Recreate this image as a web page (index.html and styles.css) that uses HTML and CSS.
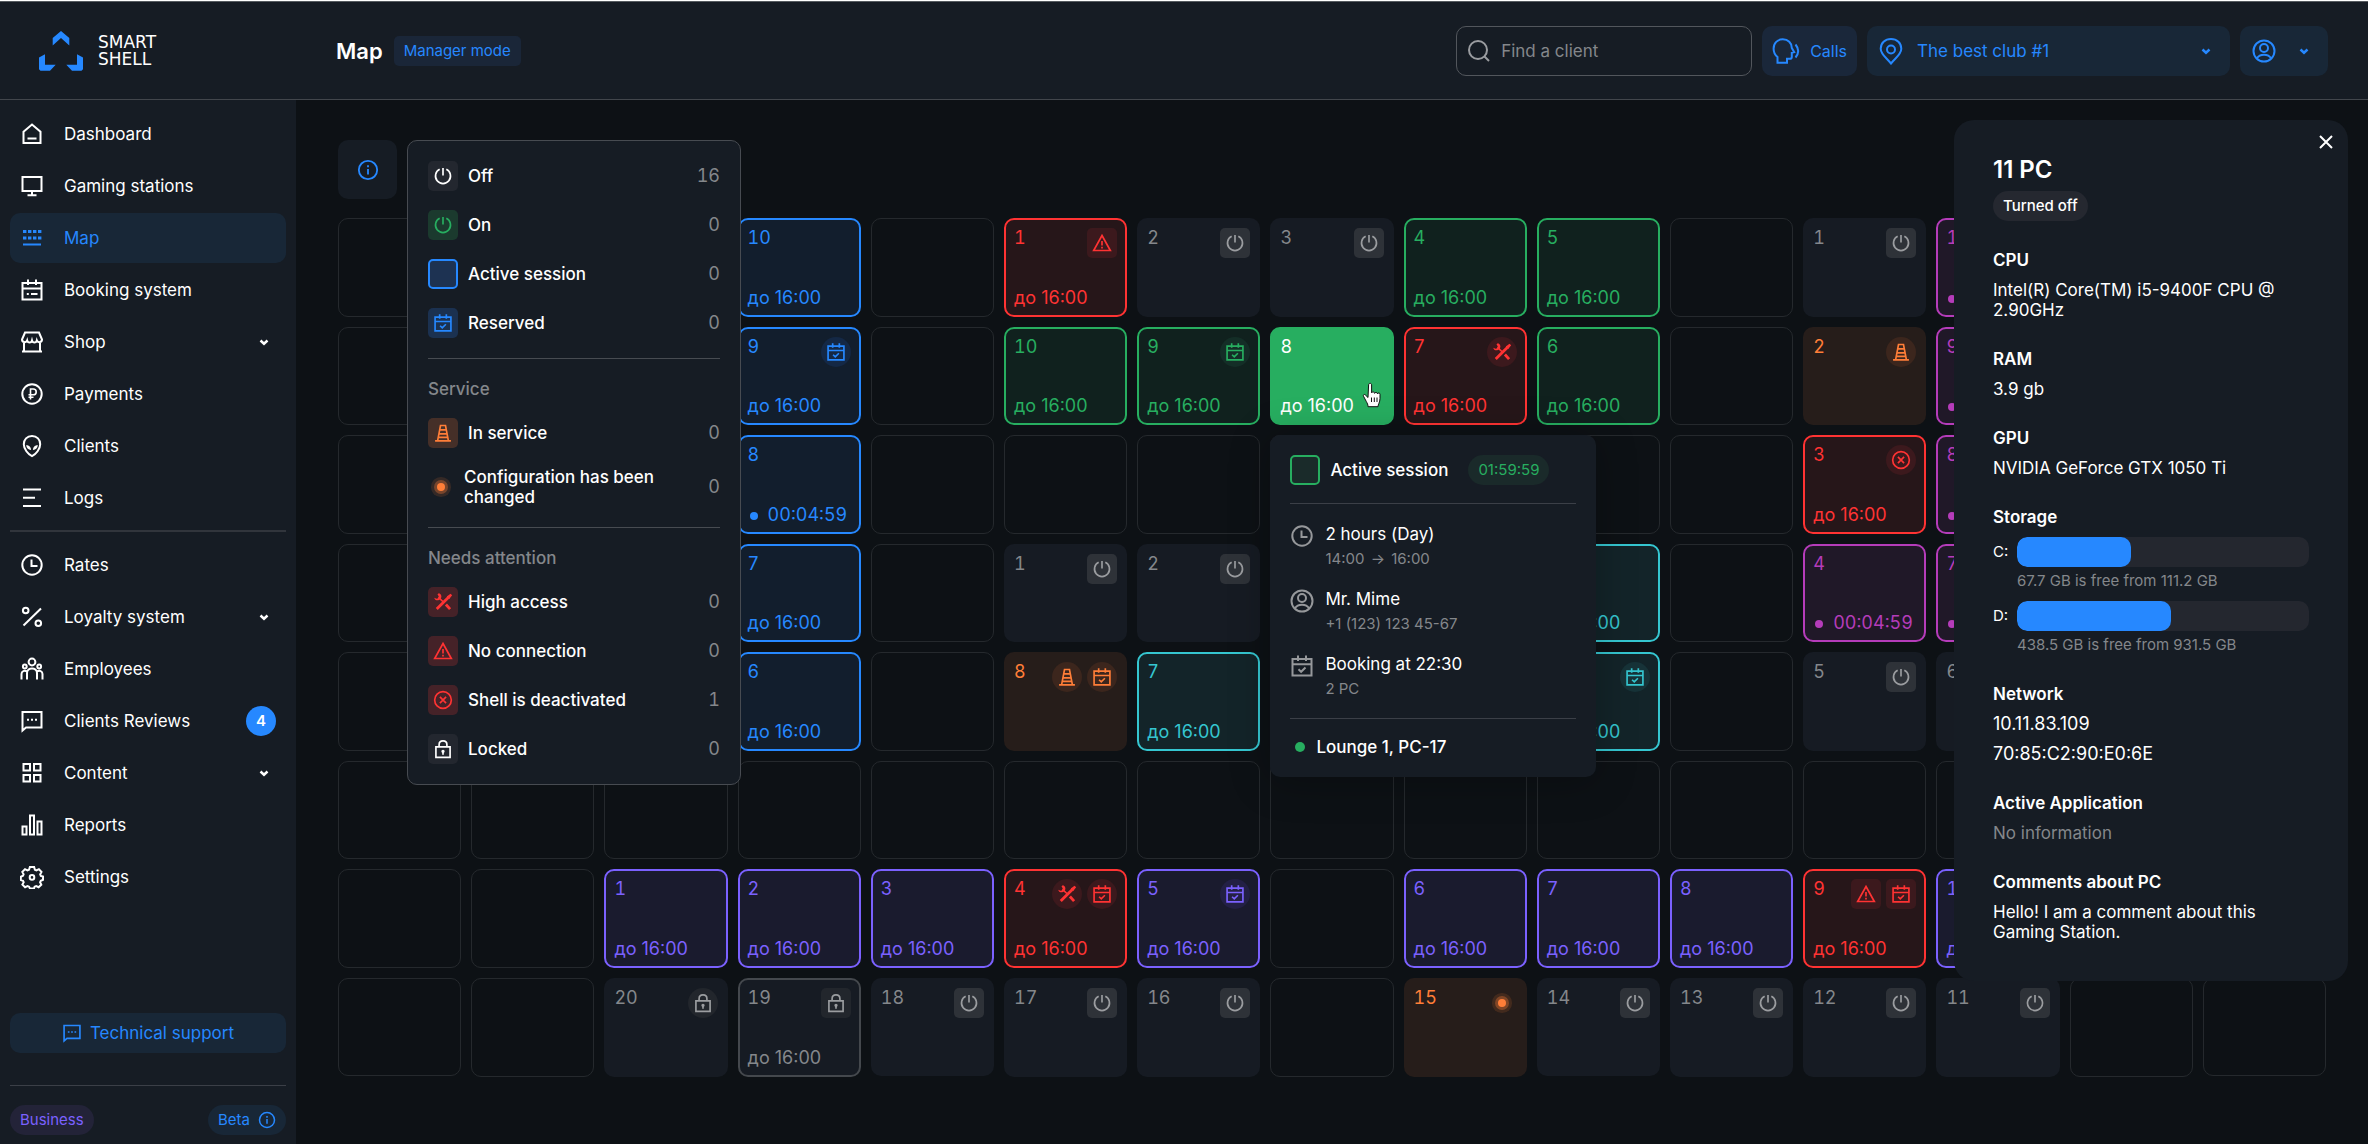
FILE: index.html
```html
<!DOCTYPE html>
<html lang="en">
<head>
<meta charset="utf-8">
<meta name="viewport" content="width=device-width, initial-scale=1">
<title>Map – Smart Shell</title>
<link rel="stylesheet" href="styles.css">
</head>
<body>
<svg class="sprite" aria-hidden="true">
  <symbol id="i-home" viewBox="0 0 24 24"><path d="M3.5 9.8 12 2.600l8.500 7.200V21h-17zM7.500 16.500h9"/></symbol>
  <symbol id="i-monitor" viewBox="0 0 24 24"><path d="M2.500 3h19v14h-19zM12 17v4M7.500 21.200h9"/></symbol>
  <symbol id="i-map" viewBox="0 0 24 24"><path d="M3 5.500h18.500M3 12h18.500" stroke-width="3.200" stroke-dasharray="3.400 1.600"/><path d="M3 18.500h18"/></symbol>
  <symbol id="i-booking" viewBox="0 0 24 24"><path d="M2.500 5h19v16.500h-19zM2.500 10.500h19M8 1.500V7M16 1.500V7M6.800 16h2M11 16h6.500"/></symbol>
  <symbol id="i-shop" viewBox="0 0 24 24"><path d="M5 2.500h14l3 7c0 3-4.200 3.600-5.200.9-.7 2.700-4.100 2.700-4.800 0-.7 2.700-4.100 2.700-4.800 0-1 2.700-5.200 2.100-5.200-.9zM4 12.500v9M20 12.500v9M2 21.500h20"/></symbol>
  <symbol id="i-ruble" viewBox="0 0 24 24"><circle cx="12" cy="12" r="9.700"/><path d="M10.500 17.500V7h2.800a2.900 2.900 0 0 1 0 5.800H8.500M8.500 15.200h5" stroke-width="1.600"/></symbol>
  <symbol id="i-alien" viewBox="0 0 24 24"><path d="M12 2c5 0 8.200 3.500 8.200 8.200 0 4.800-4.200 10-8.200 12-4-2-8.200-7.200-8.200-12C3.800 5.500 7 2 12 2z"/><path class="fill" d="M6.200 11c3 .2 4.800 2 4.900 4.900-3-.2-4.800-2-4.900-4.900zM17.800 11c-3 .2-4.800 2-4.900 4.900 3-.2 4.800-2 4.900-4.900z"/></symbol>
  <symbol id="i-logs" viewBox="0 0 24 24"><path d="M3 3.500h18M3 11.800h12M3 20h18"/></symbol>
  <symbol id="i-clock" viewBox="0 0 24 24"><circle cx="12" cy="12" r="9.700"/><path d="M11.500 6.500V13h6"/></symbol>
  <symbol id="i-percent" viewBox="0 0 24 24"><path d="M21 3.500 3.500 20.500"/><circle cx="5.700" cy="5.500" r="2.800"/><circle cx="18.300" cy="18.300" r="2.800"/></symbol>
  <symbol id="i-people" viewBox="0 0 24 24"><circle cx="12" cy="5" r="3.400"/><circle cx="4.800" cy="9.500" r="1.900"/><circle cx="19.200" cy="9.500" r="1.900"/><path d="M7 22.500V16c0-6 10-6 10 0v6.500M1.500 22.500V17c0-3 3-4 5.500-2.500M22.500 22.500V17c0-3-3-4-5.500-2.500"/></symbol>
  <symbol id="i-chat" viewBox="0 0 24 24"><path d="M2.500 3h19v15.500H6l-3.500 3zM7 10.800h2M11 10.800h2M15 10.800h2"/></symbol>
  <symbol id="i-grid" viewBox="0 0 24 24"><path d="M3.500 3h6.500v6.500H3.500zM14 3h6.500v6.500H14zM3.500 14h6.500v6.500H3.500zM14 14h6.500v6.500H14z"/></symbol>
  <symbol id="i-bars" viewBox="0 0 24 24"><path d="M2.500 13.500H6.500v8h-4zM10 2.500h4v19h-4zM17.500 8.500h4v13h-4z"/></symbol>
  <symbol id="i-gear" viewBox="0 0 24 24"><path d="M9.900 2h4.200l.8 2.800 1.500.7 2.500-1.300 2.600 2.700-1.300 2.500.6 1.500 2.200.7v3.200l-2.200.9-.7 1.500 1.200 2.500-2.700 2.500-2.400-1.200-1.600.7-.6 1.800h-4.100l-.8-1.800-1.600-.7-2.400 1.200-2.700-2.600 1.300-2.400-.7-1.500-2.200-.8v-3.200l2.200-.9.600-1.500-1.300-2.400 2.700-2.700 2.400 1.300 1.600-.7z"/><circle cx="12" cy="12.400" r="2.300"/></symbol>
  <symbol id="i-chevron" viewBox="0 0 24 24"><path d="m8.500 10.500 3.500 3.200 3.500-3.200" stroke-width="2.500"/></symbol>
  <symbol id="i-info" viewBox="0 0 24 24"><circle cx="12" cy="12" r="10"/><path d="M12 10.800v6.200M12 6.800v2.200"/></symbol>
  <symbol id="i-power" viewBox="0 0 24 24"><path d="M12 2.500v9M8 4a9 9 0 1 0 8 0"/></symbol>
  <symbol id="i-calendar" viewBox="0 0 24 24"><path d="M2.500 5h19v16.500h-19zM2.500 10.200h19M8 1.500V7M16 1.500V7M8.500 15.300l2.600 2.500 4.400-4.300"/></symbol>
  <symbol id="i-cone" viewBox="0 0 24 24"><path d="M2.500 21.500h19M5.500 21.500 9 3h6l3.500 18.500M8.200 8.200h7.600M7.200 13h9.600M6.300 17.300h11.400"/></symbol>
  <symbol id="i-tools" viewBox="0 0 24 24"><path d="M4.500 20.500 19 6M20.500 20.500l-5-5.500" stroke-width="3.400"/><path d="M12.500 12 6.500 6.500"/><path class="fill" d="M7 1.500c2.600.6 4 3.600 2.500 6.200L7.600 9.400c-2.700 1.500-5.700.1-6.100-2.600L4.300 8l1.900-.6.7-2-1.500-2.800zM16.500 5.500 21 2l2 2-3.500 4.500z"/></symbol>
  <symbol id="i-alert" viewBox="0 0 24 24"><path d="M12 3 22 21H2zM12 9.500v5.500M12 16.500v2.200"/></symbol>
  <symbol id="i-cross-circle" viewBox="0 0 24 24"><circle cx="12" cy="12" r="10"/><path d="m8.300 8.300 7.400 7.400M15.700 8.300l-7.400 7.400"/></symbol>
  <symbol id="i-lock" viewBox="0 0 24 24"><path d="M3.500 9.500h17V22h-17zM7.300 9.500V6.800c0-6 9.400-6 9.400 0v2.700M12 15v4"/><circle cx="12" cy="14.800" r="1"/></symbol>
  <symbol id="i-search" viewBox="0 0 24 24"><circle cx="11" cy="11" r="9"/><path d="m17.500 17.500 4.500 4.500"/></symbol>
  <symbol id="i-calls" viewBox="0 0 28 28"><path d="M5.500 25.700V20C2.800 17.700 1.600 15 1.600 11.700c0-5.700 4-9.400 9.200-9.400 5.300 0 9 3.700 9 8.600l2.400 4.300-2.400.6v4.100c0 1.300-.5 1.800-1.800 1.800h-3v4z"/><path d="M23.500 7.500c3.300 4 3.300 9 0 13"/></symbol>
  <symbol id="i-pin" viewBox="0 0 24 28"><path d="M12 26.500C6.500 20 1.700 17 1.700 11.700 1.700 6 6 2 12 2s10.300 4 10.300 9.700c0 5.300-4.800 8.300-10.300 14.800z"/><circle cx="12" cy="12.500" r="4"/></symbol>
  <symbol id="i-user" viewBox="0 0 24 24"><circle cx="12" cy="12" r="10.500"/><circle cx="12" cy="9" r="4"/><path d="M4.800 19.500c3-5 11.400-5 14.400 0"/></symbol>
  <symbol id="i-close" viewBox="0 0 24 24"><path d="m6 6 12 12M18 6 6 18"/></symbol>
</svg>

<div class="app">
  <header class="topbar">
    <a class="brand" href="#">
      <svg class="brand-mark" viewBox="0 0 44 40" aria-hidden="true"><path d="M22 0l8.300 7v7.600L22 7l-8.300 7.600V7zM0 26.600l6-3.300v10.500h10.700L11 39.700H1.500L0 38.300zM44 26.600l-6-3.300v10.500H27.300l5.700 5.900h9.500l1.500-1.400z"/></svg>
      <span class="brand-name">SMART<br>SHELL</span>
    </a>
    <div class="topbar-main">
      <h1 class="page-title">Map</h1>
      <span class="mode">Manager mode</span>
      <div class="tools">
        <label class="search"><svg class="icon" aria-hidden="true"><use href="#i-search"/></svg><input type="search" placeholder="Find a client" aria-label="Find a client"></label>
        <button class="tool calls" type="button"><svg class="icon icon-28"><use href="#i-calls"/></svg>Calls</button>
        <label class="tool club"><svg class="icon icon-28"><use href="#i-pin"/></svg><select aria-label="Club"><option>The best club #1</option></select><svg class="icon"><use href="#i-chevron"/></svg></label>
        <button class="tool account" type="button" aria-label="Account"><svg class="icon"><use href="#i-user"/></svg><svg class="icon"><use href="#i-chevron"/></svg></button>
      </div>
    </div>
  </header>

  <div class="body">
    <aside class="sidebar">
      <nav class="nav">
        <a class="nav-item" href="#"><svg class="icon"><use href="#i-home"/></svg><span>Dashboard</span></a>
        <a class="nav-item" href="#"><svg class="icon"><use href="#i-monitor"/></svg><span>Gaming stations</span></a>
        <a class="nav-item active" href="#" aria-current="page"><svg class="icon"><use href="#i-map"/></svg><span>Map</span></a>
        <a class="nav-item" href="#"><svg class="icon"><use href="#i-booking"/></svg><span>Booking system</span></a>
        <button class="nav-item" type="button"><svg class="icon"><use href="#i-shop"/></svg><span>Shop</span><svg class="icon"><use href="#i-chevron"/></svg></button>
        <a class="nav-item" href="#"><svg class="icon"><use href="#i-ruble"/></svg><span>Payments</span></a>
        <a class="nav-item" href="#"><svg class="icon"><use href="#i-alien"/></svg><span>Clients</span></a>
        <a class="nav-item" href="#"><svg class="icon"><use href="#i-logs"/></svg><span>Logs</span></a>
      </nav>
      <nav class="nav nav-second">
        <a class="nav-item" href="#"><svg class="icon"><use href="#i-clock"/></svg><span>Rates</span></a>
        <button class="nav-item" type="button"><svg class="icon"><use href="#i-percent"/></svg><span>Loyalty system</span><svg class="icon"><use href="#i-chevron"/></svg></button>
        <a class="nav-item" href="#"><svg class="icon"><use href="#i-people"/></svg><span>Employees</span></a>
        <a class="nav-item" href="#"><svg class="icon"><use href="#i-chat"/></svg><span>Clients Reviews</span><b class="count">4</b></a>
        <button class="nav-item" type="button"><svg class="icon"><use href="#i-grid"/></svg><span>Content</span><svg class="icon"><use href="#i-chevron"/></svg></button>
        <a class="nav-item" href="#"><svg class="icon"><use href="#i-bars"/></svg><span>Reports</span></a>
        <a class="nav-item" href="#"><svg class="icon"><use href="#i-gear"/></svg><span>Settings</span></a>
      </nav>
      <button class="support" type="button"><svg class="icon icon-20"><use href="#i-chat"/></svg>Technical support</button>
      <footer class="side-foot">
        <span class="plan">Business</span>
        <button class="beta" type="button">Beta<svg class="icon icon-18"><use href="#i-info"/></svg></button>
      </footer>
    </aside>

    <main class="main">
      <div class="legend-anchor">
        <button class="info" type="button" aria-label="Legend"><svg class="icon"><use href="#i-info"/></svg></button>
        <section class="legend" aria-label="Legend">
          <ul class="group">
            <li><i class="mark off"><svg class="icon icon-20"><use href="#i-power"/></svg></i><span>Off</span><b>16</b></li>
            <li><i class="mark on"><svg class="icon icon-20"><use href="#i-power"/></svg></i><span>On</span><b>0</b></li>
            <li><i class="mark session"></i><span>Active session</span><b>0</b></li>
            <li><i class="mark reserved"><svg class="icon icon-20"><use href="#i-calendar"/></svg></i><span>Reserved</span><b>0</b></li>
          </ul>
          <h2>Service</h2>
          <ul class="group">
            <li><i class="mark service"><svg class="icon icon-20"><use href="#i-cone"/></svg></i><span>In service</span><b>0</b></li>
            <li><i class="mark config"><i class="pulse"></i></i><span>Configuration has been changed</span><b>0</b></li>
          </ul>
          <h2>Needs attention</h2>
          <ul class="group">
            <li><i class="mark danger"><svg class="icon icon-20"><use href="#i-tools"/></svg></i><span>High access</span><b>0</b></li>
            <li><i class="mark danger"><svg class="icon icon-20"><use href="#i-alert"/></svg></i><span>No connection</span><b>0</b></li>
            <li><i class="mark danger"><svg class="icon icon-20"><use href="#i-cross-circle"/></svg></i><span>Shell is deactivated</span><b>1</b></li>
            <li><i class="mark off"><svg class="icon icon-20"><use href="#i-lock"/></svg></i><span>Locked</span><b>0</b></li>
          </ul>
        </section>
      </div>

      <ul class="board">
        <li class="slot"></li><li class="slot"></li><li class="slot"></li>
        <li><button class="tile blue" type="button"><span class="num">10</span><span class="time">до 16:00</span></button></li>
        <li class="slot"></li>
        <li><button class="tile red" type="button"><span class="num">1</span><i class="chip square"><svg class="icon icon-20"><use href="#i-alert"/></svg></i><span class="time">до 16:00</span></button></li>
        <li><button class="tile idle" type="button"><span class="num">2</span><i class="chip power"><svg class="icon icon-20"><use href="#i-power"/></svg></i></button></li>
        <li><button class="tile idle" type="button"><span class="num">3</span><i class="chip power"><svg class="icon icon-20"><use href="#i-power"/></svg></i></button></li>
        <li><button class="tile green" type="button"><span class="num">4</span><span class="time">до 16:00</span></button></li>
        <li><button class="tile green" type="button"><span class="num">5</span><span class="time">до 16:00</span></button></li>
        <li class="slot"></li>
        <li><button class="tile idle" type="button"><span class="num">1</span><i class="chip power"><svg class="icon icon-20"><use href="#i-power"/></svg></i></button></li>
        <li><button class="tile magenta" type="button"><span class="num">10</span><span class="time left">00:04:59</span></button></li>
        <li class="slot"></li><li class="slot"></li>

        <li class="slot"></li><li class="slot"></li><li class="slot"></li>
        <li><button class="tile blue" type="button"><span class="num">9</span><i class="chip"><svg class="icon icon-20"><use href="#i-calendar"/></svg></i><span class="time">до 16:00</span></button></li>
        <li class="slot"></li>
        <li><button class="tile green" type="button"><span class="num">10</span><span class="time">до 16:00</span></button></li>
        <li><button class="tile green" type="button"><span class="num">9</span><i class="chip"><svg class="icon icon-20"><use href="#i-calendar"/></svg></i><span class="time">до 16:00</span></button></li>
        <li class="current">
          <button class="tile green solid" type="button"><span class="num">8</span><span class="time">до 16:00</span></button>
          <svg class="pointer" viewBox="0 0 20 26" aria-hidden="true"><path d="M6 15.500 3.200 12.800c-1-.9-2.300.2-1.700 1.400l2.800 5.300c1 2 1.700 2.800 1.700 5.200h10c0-2.500 2-4.200 2-8.200v-4.200c0-1.700-2.200-1.800-2.500-.4 0-1.900-2.600-2-2.900-.5 0-1.900-2.700-2-3-.6V3c0-2.200-3-2.200-3 0z"/><path d="M9.500 15.500V20M12.300 15.500V20M15 15.500V20"/></svg>
          <div class="tooltip" role="tooltip">
            <div class="tip-head"><i class="mark session-green"></i><strong>Active session</strong><span class="timer">01:59:59</span></div>
            <dl class="tip-body">
              <div><svg class="icon"><use href="#i-clock"/></svg><dt>2 hours (Day)</dt><dd>14:00 <span class="arrow">→</span> 16:00</dd></div>
              <div><svg class="icon"><use href="#i-user"/></svg><dt>Mr. Mime</dt><dd>+1 (123) 123 45-67</dd></div>
              <div><svg class="icon"><use href="#i-calendar"/></svg><dt>Booking at 22:30</dt><dd>2 PC</dd></div>
            </dl>
            <p class="tip-foot">Lounge 1, PC-17</p>
          </div>
        </li>
        <li><button class="tile red" type="button"><span class="num">7</span><i class="chip"><svg class="icon icon-20"><use href="#i-tools"/></svg></i><span class="time">до 16:00</span></button></li>
        <li><button class="tile green" type="button"><span class="num">6</span><span class="time">до 16:00</span></button></li>
        <li class="slot"></li>
        <li><button class="tile orange" type="button"><span class="num">2</span><i class="chip"><svg class="icon icon-20"><use href="#i-cone"/></svg></i></button></li>
        <li><button class="tile magenta" type="button"><span class="num">9</span><span class="time left">00:04:59</span></button></li>
        <li class="slot"></li><li class="slot"></li>

        <li class="slot"></li><li class="slot"></li><li class="slot"></li>
        <li><button class="tile blue" type="button"><span class="num">8</span><span class="time left">00:04:59</span></button></li>
        <li class="slot"></li><li class="slot"></li><li class="slot"></li><li class="slot"></li><li class="slot"></li><li class="slot"></li><li class="slot"></li>
        <li><button class="tile red" type="button"><span class="num">3</span><i class="chip"><svg class="icon icon-20"><use href="#i-cross-circle"/></svg></i><span class="time">до 16:00</span></button></li>
        <li><button class="tile magenta" type="button"><span class="num">8</span><span class="time left">00:04:59</span></button></li>
        <li class="slot"></li><li class="slot"></li>

        <li class="slot"></li><li class="slot"></li><li class="slot"></li>
        <li><button class="tile blue" type="button"><span class="num">7</span><span class="time">до 16:00</span></button></li>
        <li class="slot"></li>
        <li><button class="tile idle" type="button"><span class="num">1</span><i class="chip power"><svg class="icon icon-20"><use href="#i-power"/></svg></i></button></li>
        <li><button class="tile idle" type="button"><span class="num">2</span><i class="chip power"><svg class="icon icon-20"><use href="#i-power"/></svg></i></button></li>
        <li class="slot"></li><li class="slot"></li>
        <li><button class="tile cyan" type="button"><span class="num">4</span><span class="time">до 16:00</span></button></li>
        <li class="slot"></li>
        <li><button class="tile magenta" type="button"><span class="num">4</span><span class="time left">00:04:59</span></button></li>
        <li><button class="tile magenta" type="button"><span class="num">7</span><span class="time left">00:04:59</span></button></li>
        <li class="slot"></li><li class="slot"></li>

        <li class="slot"></li><li class="slot"></li><li class="slot"></li>
        <li><button class="tile blue" type="button"><span class="num">6</span><span class="time">до 16:00</span></button></li>
        <li class="slot"></li>
        <li><button class="tile orange" type="button"><span class="num">8</span><i class="chip"><svg class="icon icon-20"><use href="#i-cone"/></svg></i><i class="chip"><svg class="icon icon-20"><use href="#i-calendar"/></svg></i></button></li>
        <li><button class="tile cyan" type="button"><span class="num">7</span><span class="time">до 16:00</span></button></li>
        <li class="slot"></li><li class="slot"></li>
        <li><button class="tile cyan" type="button"><span class="num">5</span><i class="chip"><svg class="icon icon-20"><use href="#i-calendar"/></svg></i><span class="time">до 16:00</span></button></li>
        <li class="slot"></li>
        <li><button class="tile idle" type="button"><span class="num">5</span><i class="chip power"><svg class="icon icon-20"><use href="#i-power"/></svg></i></button></li>
        <li><button class="tile idle" type="button"><span class="num">6</span><i class="chip power"><svg class="icon icon-20"><use href="#i-power"/></svg></i></button></li>
        <li class="slot"></li><li class="slot"></li>

        <li class="slot"></li><li class="slot"></li><li class="slot"></li><li class="slot"></li><li class="slot"></li><li class="slot"></li><li class="slot"></li><li class="slot"></li><li class="slot"></li><li class="slot"></li><li class="slot"></li><li class="slot"></li><li class="slot"></li><li class="slot"></li><li class="slot"></li>

        <li class="slot"></li><li class="slot"></li>
        <li><button class="tile purple" type="button"><span class="num">1</span><span class="time">до 16:00</span></button></li>
        <li><button class="tile purple" type="button"><span class="num">2</span><span class="time">до 16:00</span></button></li>
        <li><button class="tile purple" type="button"><span class="num">3</span><span class="time">до 16:00</span></button></li>
        <li><button class="tile red" type="button"><span class="num">4</span><i class="chip"><svg class="icon icon-20"><use href="#i-tools"/></svg></i><i class="chip"><svg class="icon icon-20"><use href="#i-calendar"/></svg></i><span class="time">до 16:00</span></button></li>
        <li><button class="tile purple" type="button"><span class="num">5</span><i class="chip"><svg class="icon icon-20"><use href="#i-calendar"/></svg></i><span class="time">до 16:00</span></button></li>
        <li class="slot"></li>
        <li><button class="tile purple" type="button"><span class="num">6</span><span class="time">до 16:00</span></button></li>
        <li><button class="tile purple" type="button"><span class="num">7</span><span class="time">до 16:00</span></button></li>
        <li><button class="tile purple" type="button"><span class="num">8</span><span class="time">до 16:00</span></button></li>
        <li><button class="tile red" type="button"><span class="num">9</span><i class="chip square"><svg class="icon icon-20"><use href="#i-alert"/></svg></i><i class="chip square"><svg class="icon icon-20"><use href="#i-calendar"/></svg></i><span class="time">до 16:00</span></button></li>
        <li><button class="tile purple" type="button"><span class="num">10</span><span class="time">до 16:00</span></button></li>
        <li class="slot"></li><li class="slot"></li>

        <li class="slot"></li><li class="slot"></li>
        <li><button class="tile idle" type="button"><span class="num">20</span><i class="chip"><svg class="icon icon-20"><use href="#i-lock"/></svg></i></button></li>
        <li><button class="tile idle locked" type="button"><span class="num">19</span><i class="chip square"><svg class="icon icon-20"><use href="#i-lock"/></svg></i><span class="time">до 16:00</span></button></li>
        <li><button class="tile idle" type="button"><span class="num">18</span><i class="chip power"><svg class="icon icon-20"><use href="#i-power"/></svg></i></button></li>
        <li><button class="tile idle" type="button"><span class="num">17</span><i class="chip power"><svg class="icon icon-20"><use href="#i-power"/></svg></i></button></li>
        <li><button class="tile idle" type="button"><span class="num">16</span><i class="chip power"><svg class="icon icon-20"><use href="#i-power"/></svg></i></button></li>
        <li class="slot"></li>
        <li><button class="tile orange" type="button"><span class="num">15</span><i class="chip bare"><i class="pulse"></i></i></button></li>
        <li><button class="tile idle" type="button"><span class="num">14</span><i class="chip power"><svg class="icon icon-20"><use href="#i-power"/></svg></i></button></li>
        <li><button class="tile idle" type="button"><span class="num">13</span><i class="chip power"><svg class="icon icon-20"><use href="#i-power"/></svg></i></button></li>
        <li><button class="tile idle" type="button"><span class="num">12</span><i class="chip power"><svg class="icon icon-20"><use href="#i-power"/></svg></i></button></li>
        <li><button class="tile idle" type="button"><span class="num">11</span><i class="chip power"><svg class="icon icon-20"><use href="#i-power"/></svg></i></button></li>
        <li class="slot"></li><li class="slot"></li>
      </ul>

      <aside class="details" aria-label="Station details">
        <button class="close" type="button" aria-label="Close"><svg class="icon"><use href="#i-close"/></svg></button>
        <h2>11 PC</h2>
        <span class="status">Turned off</span>
        <section><h3>CPU</h3><p>Intel(R) Core(TM) i5-9400F CPU @ 2.90GHz</p></section>
        <section><h3>RAM</h3><p>3.9 gb</p></section>
        <section><h3>GPU</h3><p>NVIDIA GeForce GTX 1050 Ti</p></section>
        <section>
          <h3>Storage</h3>
          <div class="disks">
            <div class="disk"><span>C:</span><div class="bar"><div style="width:39.1%"></div></div><small>67.7 GB is free from 111.2 GB</small></div>
            <div class="disk"><span>D:</span><div class="bar"><div style="width:52.9%"></div></div><small>438.5 GB is free from 931.5 GB</small></div>
          </div>
        </section>
        <section><h3>Network</h3><p class="address">10.11.83.109</p><p class="address">70:85:C2:90:E0:6E</p></section>
        <section><h3>Active Application</h3><p class="muted">No information</p></section>
        <section><h3>Comments about PC</h3><p>Hello! I am a comment about this Gaming Station.</p></section>
      </aside>
    </main>
  </div>
</div>
</body>
</html>
```
FILE: styles.css
```css
:root {
  --page: #0d1115;
  --surface: #161c24;
  --line: #3b3f47;
  --muted: #84878b;
  --blue: #2688ff;
  --green: #27ae60;
  --red: #ff3333;
  --orange: #ff7e38;
  --purple: #7b61ff;
  --magenta: #b53cba;
  --cyan: #35c6d0;
}

* { box-sizing: border-box; }

body {
  margin: 0;
  background: var(--page);
  color: #fff;
  font: 400 17px/20px Inter, "Liberation Sans", sans-serif;
}

h1, h2, h3, p, ul, dl, dd { margin: 0; padding: 0; }
ul { list-style: none; }
i { font-style: normal; }
a { color: inherit; text-decoration: none; }

button, input, select {
  margin: 0;
  padding: 0;
  border: 0;
  background: none;
  color: inherit;
  font: inherit;
}

button, select { cursor: pointer; }

.sprite { position: absolute; width: 0; height: 0; }

.icon {
  flex: none;
  width: 24px;
  height: 24px;
  fill: none;
  stroke: currentColor;
  stroke-width: 2;
}

.icon-18 { width: 18px; height: 18px; }
.icon-20 { width: 20px; height: 20px; }
.icon-28 { width: 28px; height: 28px; }
.fill { fill: currentColor; stroke: none; }

.app {
  display: flex;
  flex-direction: column;
  min-height: 100vh;
}

/* Top bar */
.topbar {
  display: flex;
  height: 100px;
  padding-top: 2px;
  border-top: 1px solid #fff;
  border-bottom: 1px solid #42464c;
  background: var(--surface);
  box-shadow: inset 0 1px #565b60;
}

.brand {
  display: flex;
  align-items: center;
  gap: 15px;
  width: 296px;
  padding-left: 39px;
}

.brand-mark { width: 44px; height: 40px; fill: var(--blue); }
.brand-name { font: 400 17px/17px "DejaVu Sans", sans-serif; }

.topbar-main {
  display: flex;
  flex: 1;
  align-items: center;
  gap: 11px;
  padding: 0 40px;
}

.page-title { font-size: 22px; font-weight: 600; line-height: 30px; }

.mode {
  padding: 5px 10px;
  border-radius: 5px;
  background: #1a2638;
  color: var(--blue);
  font-size: 15px;
}

.tools { display: flex; gap: 10px; margin-left: auto; }

.search, .tool {
  display: flex;
  align-items: center;
  height: 50px;
  border-radius: 10px;
}

.search {
  gap: 10px;
  width: 296px;
  padding: 0 10px;
  border: 1px solid #52565c;
  color: #9a9ca0;
}

.search input { flex: 1; min-width: 0; outline: 0; }
.search input::placeholder { color: #84878b; opacity: 1; }

.tool { background: #182737; color: var(--blue); }
.calls { gap: 10px; padding: 0 10px; background: #1a273a; font-size: 16px; }
.club { gap: 12px; width: 363px; padding: 0 12px 0 10px; }
.club select { flex: 1; appearance: none; }
.account { gap: 16px; padding: 0 12px; }

/* Sidebar */
.body { display: flex; flex: 1; }

.sidebar {
  display: flex;
  flex: none;
  flex-direction: column;
  width: 296px;
  padding: 9px 10px;
  background: var(--surface);
}

.nav { display: flex; flex-direction: column; gap: 2px; }

.nav-second {
  margin-top: 7px;
  padding-top: 8px;
  border-top: 2px solid #31353c;
}

.nav-item {
  display: flex;
  align-items: center;
  gap: 20px;
  height: 50px;
  padding: 0 10px;
  border-radius: 10px;
  text-align: left;
}

.nav-item span { flex: 1; }
.nav-item.active { background: #182737; color: var(--blue); }

.count {
  width: 30px;
  border-radius: 15px;
  background: var(--blue);
  font-size: 15px;
  font-weight: 600;
  line-height: 30px;
  text-align: center;
}

.support {
  display: flex;
  align-items: center;
  justify-content: center;
  gap: 8px;
  height: 40px;
  margin-top: auto;
  border-radius: 10px;
  background: #182737;
  color: var(--blue);
}

.side-foot {
  display: flex;
  justify-content: space-between;
  margin-top: 32px;
  padding-top: 19px;
  border-top: 1px solid var(--line);
}

.plan, .beta {
  display: flex;
  align-items: center;
  gap: 8px;
  height: 30px;
  padding: 0 10px;
  border-radius: 15px;
  background: #232338;
  color: var(--purple);
  font-size: 15px;
}

.beta { background: #182737; color: var(--blue); }

/* Map area */
.main {
  position: relative;
  flex: 1;
  min-width: 0;
  padding: 40px 42px;
}

.legend-anchor { position: relative; width: 59px; margin-bottom: 19px; }

.info {
  display: flex;
  align-items: center;
  justify-content: center;
  width: 59px;
  height: 59px;
  border-radius: 10px;
  background: var(--surface);
  color: var(--blue);
}

.info .icon { width: 22px; height: 22px; }

.legend {
  position: absolute;
  z-index: 3;
  top: 0;
  left: calc(100% + 10px);
  width: 334px;
  padding: 20px;
  border: 1px solid #474b51;
  border-radius: 10px;
  background: var(--surface);
}

.legend h2 {
  margin: 20px 0 19px;
  padding-top: 20px;
  border-top: 1px solid #474b51;
  color: var(--muted);
  font-size: 17px;
  font-weight: 500;
}

.group { display: flex; flex-direction: column; gap: 19px; }
.group li { display: flex; align-items: center; gap: 10px; font-weight: 500; }
.group span { flex: 1; }

.group b {
  color: var(--muted);
  font-size: 18px;
  font-weight: 400;
  font-variant-numeric: tabular-nums;
}

.mark, .chip {
  display: flex;
  flex: none;
  align-items: center;
  justify-content: center;
  width: 30px;
  height: 30px;
  border-radius: 5px;
}

.mark.off { background: #23272f; }
.mark.on { background: #1b3a2e; color: var(--green); }
.mark.session { border: 2px solid var(--blue); background: #1d3252; }
.mark.session-green { border: 2px solid var(--green); background: #1a2b2a; }
.mark.reserved { background: #1b3150; color: var(--blue); }
.mark.service { background: #452f28; color: var(--orange); }
.mark.danger { background: #452228; color: var(--red); }
.mark.config { width: 26px; }

.pulse {
  width: 8px;
  height: 8px;
  border-radius: 50%;
  background: var(--orange);
  box-shadow: 0 0 0 3px #ff7e3855, 0 0 0 6px #ff7e3822;
}

.board {
  display: grid;
  grid-template-columns: repeat(15, minmax(0, 1fr));
  gap: 10px;
}

.board > li { aspect-ratio: 5 / 4; }
.slot { border: 1px solid #25292d; border-radius: 10px; }

.tile {
  display: flex;
  flex-wrap: wrap;
  align-content: space-between;
  column-gap: 5px;
  width: 100%;
  height: 100%;
  padding: 8px 8px 7px;
  border: 2px solid;
  border-radius: 10px;
  font-size: 18px;
  text-align: left;
}

.num { flex: 1; font-variant-numeric: tabular-nums; }
.time { width: 100%; }
.left { font-variant-numeric: tabular-nums; }

.left::before {
  content: "";
  display: inline-block;
  width: 8px;
  height: 8px;
  margin: 0 10px 1px 2px;
  border-radius: 50%;
  background: currentColor;
}

.chip { border-radius: 50%; }
.chip.square, .chip.power { border-radius: 5px; }

.blue { background: #121e2d; color: var(--blue); }
.blue .chip { background: #142845; }
.green { background: #10211e; color: var(--green); }
.green .chip { background: #142e27; }
.red { background: #261619; color: var(--red); }
.red .chip { background: #3c191d; }
.orange { border-color: transparent; background: #261d1a; color: var(--orange); }
.orange .chip { background: #3c261d; }
.purple { background: #1a1b2e; color: var(--purple); }
.purple .chip { background: #232045; }
.magenta { background: #201828; color: var(--magenta); }
.cyan { background: #132429; color: var(--cyan); }
.cyan .chip { background: #173338; }
.idle { border-color: transparent; background: #161b23; color: var(--muted); }
.idle .chip { background: #22262c; color: #9b9da0; }
.idle .chip.power { background: #2e3238; }
.locked { border-color: #44484d; }
.tile .chip.bare { background: none; }
.solid { border-color: var(--green); background: var(--green); color: #fff; }

/* Hovered station */
.current { position: relative; }

.pointer {
  position: absolute;
  right: 12px;
  bottom: 17px;
  width: 20px;
  height: 26px;
  fill: #fff;
  stroke: #111;
  stroke-width: 1;
}

.tooltip {
  position: absolute;
  z-index: 2;
  top: calc(100% + 10px);
  left: 0;
  width: 326px;
  padding: 20px;
  border-radius: 10px;
  background: var(--surface);
  box-shadow: 0 4px 40px #0004;
}

.tip-head { display: flex; align-items: center; gap: 10px; }
.tip-head strong { font-weight: 500; }

.timer {
  margin-left: 10px;
  padding: 5px 10px;
  border-radius: 15px;
  background: #1a2a2a;
  color: var(--green);
  font-size: 15px;
}

.tip-body {
  display: grid;
  gap: 20px;
  margin: 18px 0;
  padding: 20px 0 19px;
  border: solid var(--line);
  border-width: 1px 0;
}

.tip-body div {
  display: grid;
  grid-template-columns: 25px 1fr;
  gap: 5px 10px;
}

.tip-body .icon { grid-row: span 2; color: #96989b; }
.tip-body dd { color: var(--muted); font-size: 15px; }
.arrow { margin: 0 2px; }

.tip-foot { display: flex; align-items: center; gap: 11px; padding-left: 5px; font-weight: 500; }
.tip-foot::before { content: ""; width: 10px; height: 10px; border-radius: 50%; background: var(--green); }

/* Station details */
.details {
  position: absolute;
  z-index: 2;
  top: 20px;
  right: 20px;
  width: 394px;
  padding: 39px;
  border-radius: 20px;
  background: var(--surface);
}

.close { position: absolute; top: 10px; right: 10px; width: 24px; height: 24px; }
.details h2 { font-size: 24px; font-weight: 600; line-height: 22px; }

.status {
  display: inline-block;
  margin-top: 10px;
  padding: 5px 10px;
  border-radius: 15px;
  background: #252830;
  font-size: 15px;
  font-weight: 500;
}

.details section { display: grid; gap: 10px; margin-top: 29px; }
.details h3 { font-size: 17px; font-weight: 600; }
.address { font-size: 18px; }
.muted, .disk small { color: var(--muted); }
.disks { display: grid; gap: 10px; }
.disk { display: grid; grid-template-columns: 24px 1fr; row-gap: 4px; align-items: center; font-size: 15px; }
.disk small { grid-column: 2; font-size: 15px; }
.bar { overflow: hidden; border-radius: 10px; background: #24272f; }
.bar div { height: 30px; border-radius: 10px; background: var(--blue); }
```
